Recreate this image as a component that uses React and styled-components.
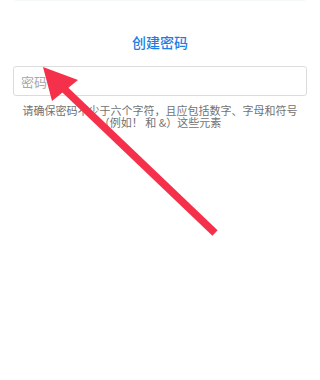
import React from 'react';
import styled, { createGlobalStyle } from 'styled-components';

const GlobalStyle = createGlobalStyle`
  * { box-sizing: border-box; }
  html, body {
    margin: 0;
    padding: 0;
    background: #ffffff;
    font-family: "Noto Sans CJK SC", "Noto Sans", sans-serif;
  }
`;

const Page = styled.main`
  position: relative;
  width: 320px;
  height: 380px;
  overflow: hidden;
  background: #ffffff;
`;

const TopEdge = styled.div`
  height: 1px;
  margin: 0 15px;
  background: #f3f7f5;
`;

const Form = styled.section`
  display: flex;
  flex-direction: column;
  padding: 0 13px;
`;

const Title = styled.h1`
  margin: 31px 0 14px;
  font-size: 14px;
  line-height: 20px;
  font-weight: 500;
  text-align: center;
  color: #1d7ee2;
`;

const Input = styled.input`
  width: 100%;
  height: 30px;
  padding: 0 7px;
  font-family: inherit;
  font-size: 13px;
  color: #333;
  border: 1px solid #dcdcdc;
  border-radius: 3px;
  outline: none;
  &::placeholder {
    color: #a8a8a8;
  }
`;

const Hint = styled.p`
  margin: 8px 0 0;
  padding: 0 6px;
  font-size: 11px;
  line-height: 12px;
  text-align: center;
  color: #727272;
`;

const Overlay = styled.svg`
  position: absolute;
  left: 0;
  top: 0;
  pointer-events: none;
`;

const Arrow = () => (
  <Overlay width="320" height="380" viewBox="0 0 320 380">
    <line x1="215" y1="233" x2="60" y2="85" stroke="#f5304a" strokeWidth="7.5" />
    <polygon points="43,67 78,80 52,101" fill="#f5304a" />
  </Overlay>
);

export default function App() {
  return (
    <Page>
      <GlobalStyle />
      <TopEdge />
      <Form>
        <Title>创建密码</Title>
        <Input type="password" placeholder="密码" />
        <Hint>请确保密码不少于六个字符，且应包括数字、字母和符号（例如！ 和 &amp;）这些元素</Hint>
      </Form>
      <Arrow />
    </Page>
  );
}
